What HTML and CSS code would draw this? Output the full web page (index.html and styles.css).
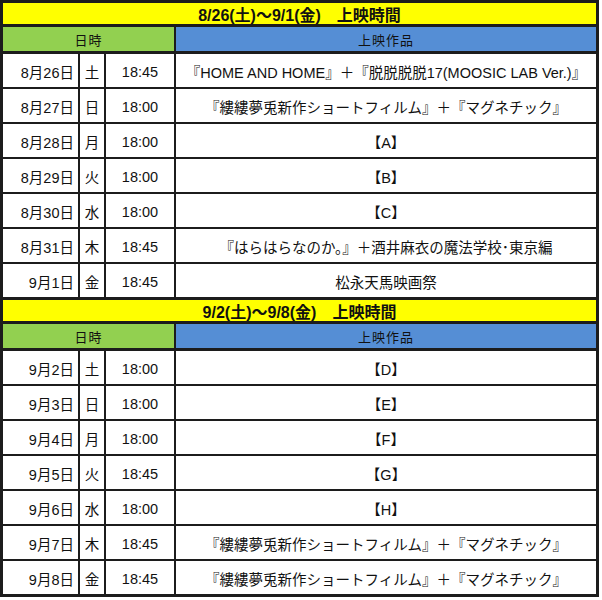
FILE: index.html
```html
<!DOCTYPE html>
<html lang="ja">
<head>
<meta charset="utf-8">
<title>上映時間</title>
<link rel="stylesheet" href="styles.css">
</head>
<body>
<div class="schedule">
  <div class="title first">8/26(土)～9/1(金)　上映時間</div>
  <div class="head span3">日時</div>
  <div class="head blue">上映作品</div>

  <div class="date">8月26日</div><div class="wd">土</div><div class="time">18:45</div><div class="film">『HOME AND HOME』＋『脱脱脱脱17(MOOSIC LAB Ver.)』</div>
  <div class="date">8月27日</div><div class="wd">日</div><div class="time">18:00</div><div class="film">『縷縷夢兎新作ショートフィルム』＋『マグネチック』</div>
  <div class="date">8月28日</div><div class="wd">月</div><div class="time">18:00</div><div class="film">【A】</div>
  <div class="date">8月29日</div><div class="wd">火</div><div class="time">18:00</div><div class="film">【B】</div>
  <div class="date">8月30日</div><div class="wd">水</div><div class="time">18:00</div><div class="film">【C】</div>
  <div class="date">8月31日</div><div class="wd">木</div><div class="time">18:45</div><div class="film">『はらはらなのか。』＋酒井麻衣の魔法学校･東京編</div>
  <div class="date">9月1日</div><div class="wd">金</div><div class="time">18:45</div><div class="film">松永天馬映画祭</div>

  <div class="title">9/2(土)～9/8(金)　上映時間</div>
  <div class="head span3">日時</div>
  <div class="head blue">上映作品</div>

  <div class="date">9月2日</div><div class="wd">土</div><div class="time">18:00</div><div class="film">【D】</div>
  <div class="date">9月3日</div><div class="wd">日</div><div class="time">18:00</div><div class="film">【E】</div>
  <div class="date">9月4日</div><div class="wd">月</div><div class="time">18:00</div><div class="film">【F】</div>
  <div class="date">9月5日</div><div class="wd">火</div><div class="time">18:45</div><div class="film">【G】</div>
  <div class="date">9月6日</div><div class="wd">水</div><div class="time">18:00</div><div class="film">【H】</div>
  <div class="date">9月7日</div><div class="wd">木</div><div class="time">18:45</div><div class="film">『縷縷夢兎新作ショートフィルム』＋『マグネチック』</div>
  <div class="date">9月8日</div><div class="wd">金</div><div class="time">18:45</div><div class="film">『縷縷夢兎新作ショートフィルム』＋『マグネチック』</div>
</div>
</body>
</html>
```
FILE: styles.css
```css
html, body {
  margin: 0;
  padding: 0;
  background: #ffffff;
}

body {
  font-family: "Liberation Sans", "Noto Sans CJK JP", sans-serif;
  color: #111111;
}

.schedule {
  display: grid;
  grid-template-columns: 75px 24px 68px 420px;
  gap: 2px;
  width: fit-content;
  background: #1c1c1c;
  border: 3px solid #1c1c1c;
}

.schedule > div {
  display: flex;
  align-items: center;
  justify-content: center;
  background: #ffffff;
  white-space: nowrap;
  overflow: hidden;
}

.title {
  grid-column: 1 / -1;
  height: 21px;
  background: #ffff00 !important;
  font-weight: bold;
  font-size: 16px;
  margin-top: 1px;
  margin-bottom: 1px;
}

.title.first {
  margin-top: 0;
}

.head {
  height: 24px;
  font-size: 13px;
  letter-spacing: 1px;
  margin-bottom: 1px;
  padding-top: 1px;
  box-sizing: border-box;
  background: #92d050 !important;
}

.head.span3 {
  grid-column: 1 / 4;
}

.head.blue {
  background: #558ed5 !important;
}

.date, .wd, .time, .film {
  height: 33px;
  font-size: 14.5px;
  padding-top: 2px;
  box-sizing: border-box;
}

.schedule > .date {
  justify-content: flex-end;
  padding-right: 4px;
}
```
